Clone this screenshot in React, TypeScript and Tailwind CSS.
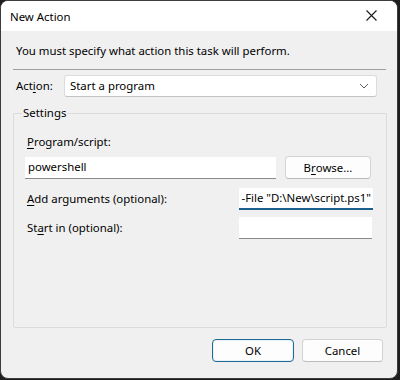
import { useState } from "react";

function Mnemonic({ text, at }: { text: string; at: number }) {
  return (
    <>
      {text.slice(0, at)}
      <u className="underline-offset-[2px]">{text[at]}</u>
      {text.slice(at + 1)}
    </>
  );
}

function Field({ value, focused, className }: { value: string; focused?: boolean; className: string }) {
  return (
    <div
      className={`h-[22px] bg-white flex items-center overflow-hidden whitespace-nowrap ${
        focused ? "border-b-2 border-[#1b5f8c] justify-end pr-[2px]" : "border-b border-[#8a8a8a] pl-[3px]"
      } ${className}`}
    >
      {value}
    </div>
  );
}

function DialogButton({ label, primary, className }: { label: React.ReactNode; primary?: boolean; className: string }) {
  return (
    <button
      className={`h-[23px] rounded-[4px] bg-[#fdfdfd] flex items-center justify-center text-black ${
        primary ? "border border-[#1f6a94] shadow-[inset_0_0_0_1px_#e8f1f7]" : "border border-[#d3d3d3] border-b-[#bcbcbc]"
      } ${className}`}
    >
      {label}
    </button>
  );
}

export default function App() {
  const [args] = useState('-File "D:\\New\\script.ps1"');

  return (
    <div className="w-[400px] h-[380px] bg-[#1e1e1e]" style={{ fontFamily: '"Noto Sans", "Open Sans", sans-serif' }}>
      <div className="w-[398px] h-[379px] rounded-[8px] border border-[#3c3c3c] overflow-hidden bg-[#f0f0f0] text-[11.4px] text-black leading-4">
        {/* Title bar */}
        <div className="h-[30px] bg-white flex items-center justify-between pl-[9px] pr-[8px]">
          <span className="mt-[1px]">New Action</span>
          <svg width="30" height="30" viewBox="0 0 30 30" className="mr-[2px]">
            <path d="M9.5 9.5 L19.5 19.5 M19.5 9.5 L9.5 19.5" stroke="#1a1a1a" strokeWidth="1.1" />
          </svg>
        </div>

        {/* Body */}
        <div className="mt-[12px] pl-[15px] h-4">You must specify what action this task will perform.</div>
        <div className="mt-[10px] ml-[12px] w-[373px] h-px bg-[#a0a0a0]" />

        <div className="mt-[5px] flex items-center h-[22px] pl-[15px]">
          <span className="w-[48px]">
            <Mnemonic text="Action:" at={3} />
          </span>
          <div className="w-[313px] h-[22px] bg-white border border-[#dcdcdc] border-b-[#c4c4c4] rounded-[3px] flex items-center justify-between pl-[5px] pr-[7px]">
            <span>Start a program</span>
            <svg width="10" height="6" viewBox="0 0 10 6">
              <path d="M1 1 L5 5 L9 1" fill="none" stroke="#5f5f5f" strokeWidth="1" />
            </svg>
          </div>
        </div>

        {/* Settings group */}
        <div className="relative mt-[16px] ml-[12px] w-[374px] h-[215px] border border-[#dcdcdc] rounded-[2px]">
          <span className="absolute -top-[9px] left-[8px] px-[1px] bg-[#f0f0f0]">Settings</span>

          <div className="mt-[20px] pl-[13px] h-4">
            <Mnemonic text="Program/script:" at={0} />
          </div>
          <div className="mt-[6px] flex items-center pl-[11px] gap-[9px]">
            <Field value="powershell" className="w-[251px]" />
            <DialogButton label={<Mnemonic text="Browse..." at={1} />} className="w-[86px] h-[22px]" />
          </div>

          <div className="mt-[9px] flex items-center pl-[13px]">
            <span className="w-[212px]">
              <Mnemonic text="Add arguments (optional):" at={0} />
            </span>
            <Field value={args} focused className="w-[134px]" />
          </div>

          <div className="mt-[7px] flex items-center pl-[13px]">
            <span className="w-[212px]">
              <Mnemonic text="Start in (optional):" at={2} />
            </span>
            <Field value="" className="w-[133px]" />
          </div>
        </div>

        {/* Buttons */}
        <div className="mt-[11px] flex justify-end gap-[8px] pr-[14px]">
          <DialogButton label="OK" primary className="w-[82px]" />
          <DialogButton label="Cancel" className="w-[81px]" />
        </div>
      </div>
    </div>
  );
}
